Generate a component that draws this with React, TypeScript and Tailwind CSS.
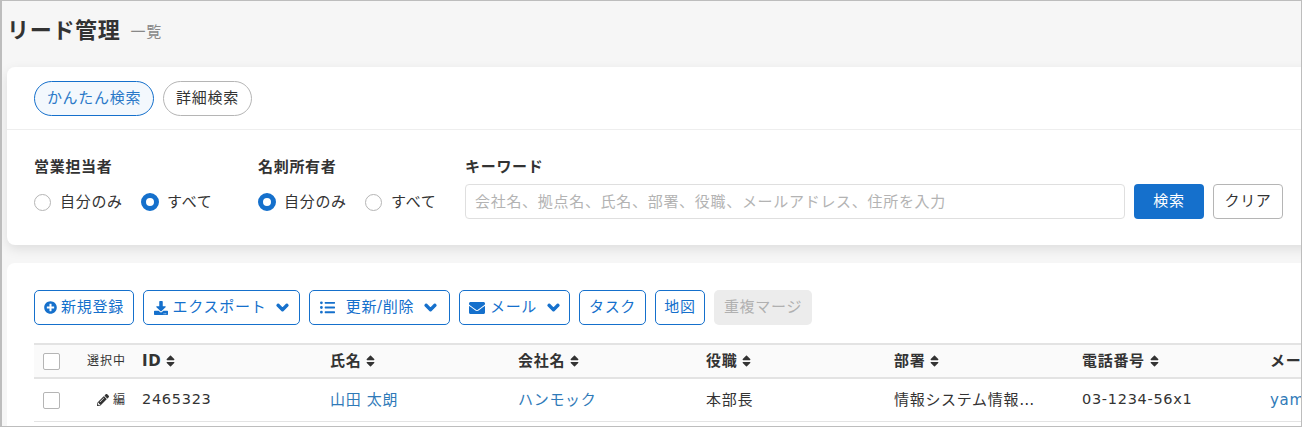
import React from 'react';
import { FaPlusCircle, FaDownload, FaListUl, FaEnvelope, FaChevronDown, FaSort, FaPencilAlt } from 'react-icons/fa';

const font = { fontFamily: '"DejaVu Sans", "Noto Sans CJK JP", sans-serif' };

const OutlineButton = ({ children, className = '' }: { children: React.ReactNode; className?: string }) => (
  <button className={`h-[35px] flex items-center justify-center rounded-[5px] border border-[#1570cc] bg-white text-[15px] tracking-[0.7px] text-[#1570cc] whitespace-nowrap ${className}`}>
    {children}
  </button>
);

const Chevron = () => <FaChevronDown stroke="currentColor" strokeWidth={50} className="w-[13px] h-[13px] ml-[10px]" />;

const Radio = ({ checked, label, className = '' }: { checked?: boolean; label: string; className?: string }) => (
  <label className={`flex items-center text-[15px] tracking-[0.7px] text-[#333] ${className}`}>
    {checked ? (
      <span className="w-[18px] h-[18px] rounded-full border-[5px] border-[#1570cc] bg-white" />
    ) : (
      <span className="w-[17px] h-[17px] rounded-full border border-[#b5b5b5] bg-white" />
    )}
    <span className={checked ? 'ml-[8px]' : 'ml-[9px]'}>{label}</span>
  </label>
);

const SortHead = ({ label }: { label: string }) => (
  <div className="flex items-center gap-[5px] text-[15px] tracking-[0.7px] font-bold text-[#333] whitespace-nowrap">
    {label}
    <FaSort className="w-[9px] h-[14px] text-[#333]" />
  </div>
);

const Checkbox = () => <span className="block w-[17px] h-[17px] rounded-[2px] border border-[#b5b5b5] bg-white" />;

const gridCols = 'grid grid-cols-[27px_72px_188px_188px_188px_188px_188px_188px_188px] items-center';

export default function App() {
  return (
    <div style={font} className="w-[1302px] h-[427px] overflow-hidden bg-[#f6f6f6] border-t border-l-2 border-r border-b border-[#bdbdbd] box-border">
      <div className="w-[1500px] pl-[5px]">
        <div className="h-[66px] flex items-center pb-[6px]">
          <h1 className="text-[22px] tracking-[0.7px] font-bold leading-none text-[#333]">リード管理</h1>
          <span className="ml-[10px] text-[15px] tracking-[0.7px] text-[#888] mt-[3px]">一覧</span>
        </div>

        <section className="h-[178px] w-[1400px] rounded-[8px] bg-white shadow-[0_4px_12px_rgba(0,0,0,0.1)]">
          <div className="h-[63px] border-b border-[#eeeeee] pl-[27px] pt-[14px] flex gap-[9px]">
            <button className="h-[35px] w-[120px] rounded-full border border-[#1570cc] bg-[#f3f8fd] text-[15px] tracking-[0.7px] text-[#2a78c8] whitespace-nowrap">かんたん検索</button>
            <button className="h-[35px] w-[89px] rounded-full border border-[#b5b5b5] bg-white text-[15px] tracking-[0.7px] text-[#333] whitespace-nowrap">詳細検索</button>
          </div>
          <div className="pl-[27px] pt-[27px] flex">
            <div className="w-[224px]">
              <div className="text-[15px] tracking-[0.7px] font-bold text-[#333] leading-[20px]">営業担当者</div>
              <div className="flex mt-[15px] h-[20px]">
                <Radio label="自分のみ" className="w-[107px]" />
                <Radio checked label="すべて" />
              </div>
            </div>
            <div className="w-[207px]">
              <div className="text-[15px] tracking-[0.7px] font-bold text-[#333] leading-[20px]">名刺所有者</div>
              <div className="flex mt-[15px] h-[20px]">
                <Radio checked label="自分のみ" className="w-[107px]" />
                <Radio label="すべて" />
              </div>
            </div>
            <div>
              <div className="text-[15px] tracking-[0.7px] font-bold text-[#333] leading-[20px]">キーワード</div>
              <div className="flex mt-[7px] gap-[9px]">
                <input
                  readOnly
                  placeholder="会社名、拠点名、氏名、部署、役職、メールアドレス、住所を入力"
                  className="w-[660px] h-[35px] rounded-[4px] border border-[#dfdfdf] px-[9px] text-[15px] tracking-[0.7px] placeholder:text-[#b3b3b3] outline-none"
                />
                <button className="w-[70px] h-[35px] rounded-[4px] bg-[#1570cc] text-[15px] tracking-[0.7px] text-white">検索</button>
                <button className="w-[70px] h-[35px] rounded-[4px] border border-[#b5b5b5] bg-white text-[15px] tracking-[0.7px] text-[#333]">クリア</button>
              </div>
            </div>
          </div>
        </section>

        <section className="mt-[18px] h-[300px] w-[1400px] rounded-[8px] bg-white pl-[27px] pt-[27px]">
          <div className="flex gap-[9px]">
            <OutlineButton className="w-[100px]">
              <FaPlusCircle className="w-[13px] h-[13px] mr-[4px]" />新規登録
            </OutlineButton>
            <OutlineButton className="w-[157px]">
              <FaDownload className="w-[14px] h-[14px] mr-[5px]" />エクスポート
              <Chevron />
            </OutlineButton>
            <OutlineButton className="w-[141px] pr-[2px]">
              <FaListUl className="w-[15px] h-[15px] mr-[11px]" />更新/削除
              <Chevron />
            </OutlineButton>
            <OutlineButton className="w-[111px]">
              <FaEnvelope className="w-[16px] h-[16px] mr-[5px]" />メール
              <Chevron />
            </OutlineButton>
            <OutlineButton className="w-[67px]">タスク</OutlineButton>
            <OutlineButton className="w-[50px]">地図</OutlineButton>
            <button className="w-[98px] h-[35px] rounded-[5px] bg-[#ececec] text-[15px] tracking-[0.7px] text-[#b0b0b0] whitespace-nowrap">重複マージ</button>
          </div>

          <div className="mt-[18px] border-t-2 border-[#e3e3e3]">
            <div className={`${gridCols} h-[32px] bg-[#fafafa] border-b-2 border-[#e3e3e3] box-content pl-[9px]`}>
              <Checkbox />
              <div className="text-[12px] tracking-[1px] text-[#333] text-right pr-[16px] whitespace-nowrap">選択中</div>
              <SortHead label="ID" />
              <SortHead label="氏名" />
              <SortHead label="会社名" />
              <SortHead label="役職" />
              <SortHead label="部署" />
              <SortHead label="電話番号" />
              <SortHead label="メールアドレス" />
            </div>
            <div className={`${gridCols} h-[42px] border-b border-[#e3e3e3] box-content pl-[9px] text-[15px] tracking-[0.7px] text-[#333]`}>
              <Checkbox />
              <div className="flex items-center justify-end gap-[4px] pr-[16px] text-[12px] tracking-[1px] whitespace-nowrap">
                <FaPencilAlt className="w-[12px] h-[12px]" />編
              </div>
              <div className="text-[14.5px]">2465323</div>
              <div className="text-[#2f7ab8]">山田 太朗</div>
              <div className="text-[#2f7ab8]">ハンモック</div>
              <div>本部長</div>
              <div className="w-[142px] truncate">情報システム情報システム部</div>
              <div className="text-[14.5px]">03-1234-56x1</div>
              <div className="text-[#2f7ab8]">yamada@example.com</div>
            </div>
          </div>
        </section>
      </div>
    </div>
  );
}
